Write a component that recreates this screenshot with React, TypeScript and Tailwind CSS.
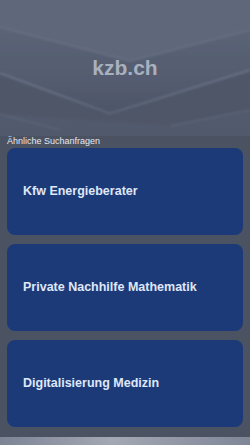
import React from 'react';

const searches = ['Kfw Energieberater', 'Private Nachhilfe Mathematik', 'Digitalisierung Medizin'];

function Backdrop() {
    return (
        <svg className="absolute inset-0 h-full w-full" viewBox="0 0 250 445" preserveAspectRatio="none">
            <defs>
                <linearGradient id="bg" x1="0" y1="0" x2="0" y2="1">
                    <stop offset="0" stopColor="#5a6376" />
                    <stop offset="0.5" stopColor="#4b5366" />
                    <stop offset="1" stopColor="#3e4658" />
                </linearGradient>
                <linearGradient id="face" x1="0" y1="0" x2="0" y2="1">
                    <stop offset="0" stopColor="#5c6578" />
                    <stop offset="1" stopColor="#4e5669" />
                </linearGradient>
                <linearGradient id="foot" x1="0" y1="0" x2="1" y2="0">
                    <stop offset="0" stopColor="#7d8494" />
                    <stop offset="0.45" stopColor="#a3a8b4" />
                    <stop offset="1" stopColor="#7f8696" />
                </linearGradient>
                <filter id="soft">
                    <feGaussianBlur stdDeviation="1.2" />
                </filter>
            </defs>
            <rect width="250" height="445" fill="url(#bg)" />
            <g filter="url(#soft)">
                <polygon points="-5,-5 255,-5 255,30 130,61 -5,26" fill="#5f687a" />
                <polygon points="-5,26 130,61 255,30 255,70 110,114 -5,72" fill="url(#face)" />
                <polyline points="0,27 130,61 250,30" fill="none" stroke="#687185" strokeWidth="1.5" />
                <polyline points="0,73 110,114 250,70" fill="none" stroke="#677084" strokeWidth="2" />
                <polygon points="-5,73 110,114 255,70 255,110 170,126 -5,114" fill="#4f5768" />
                <polyline points="0,114 60,130" fill="none" stroke="#5c6576" strokeWidth="1.5" />
                <polyline points="170,126 250,110" fill="none" stroke="#5c6576" strokeWidth="1.5" />
            </g>
            <rect y="437" width="250" height="8" fill="url(#foot)" />
        </svg>
    );
}

export default function App() {
    return (
        <div className="relative h-[445px] w-[250px] overflow-hidden font-['Liberation_Sans',Arial,sans-serif]">
            <Backdrop />
            <div className="relative flex h-[136px] items-center justify-center">
                <h1 className="text-[21px] font-bold text-[#a9b0be]">kzb.ch</h1>
            </div>
            <div className="relative h-[301px] bg-[#4b5262] px-[7px]">
                <p className="text-[9px] leading-[11px] text-[#e6e9ef]">Ähnliche Suchanfragen</p>
                <div className="mt-[1px] flex flex-col gap-[9px]">
                    {searches.map((s) => (
                        <div
                            key={s}
                            className="flex h-[87px] items-center rounded-[8px] bg-[#1d3a78] pl-[16px] text-[12.5px] font-bold text-[#dfe7f8]"
                        >
                            {s}
                        </div>
                    ))}
                </div>
            </div>
        </div>
    );
}
